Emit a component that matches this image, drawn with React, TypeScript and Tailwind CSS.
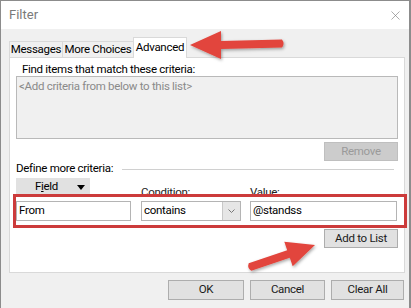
import { X } from "lucide-react";

const font = { fontFamily: 'Roboto, "Noto Sans", sans-serif' };

function Btn({ label, w, disabled }: { label: string; w: string; disabled?: boolean }) {
  return (
    <div
      className={`${w} h-[19px] flex items-center justify-center text-[11.5px] whitespace-nowrap border ${
        disabled
          ? "bg-[#cccccc] border-[#bfbfbf] text-[#9a9a9a]"
          : "bg-[#e1e1e1] border-[#adadad] text-[#1a1a1a]"
      }`}
    >
      {label}
    </div>
  );
}

export default function App() {
  return (
    <div
      className="relative w-[411px] h-[308px] overflow-hidden bg-[#f0f0f0] border-l border-r-2 border-t border-[#8c8c8c] tracking-[-0.3px]"
      style={font}
    >
      {/* title bar */}
      <div className="h-[28px] bg-white flex items-center justify-between pl-[8px] pr-[6px]">
        <span className="text-[13px] tracking-normal text-[#7a7a7a]">Filter</span>
        <X size={15} strokeWidth={1} className="text-[#7a7a7a]" />
      </div>

      <div className="pl-[8px] pr-[4px]">
        {/* tabs */}
        <div className="flex items-end h-[28px] pt-[8px] text-[11.5px] text-black whitespace-nowrap">
          <div className="w-[53px] h-[16px] flex items-center justify-center border-l border-t border-[#d9d9d9] leading-none">
            Messages
          </div>
          <div className="w-[71px] h-[16px] flex items-center justify-center border-l border-t border-[#d9d9d9] leading-none">
            More Choices
          </div>
          <div className="relative z-10 w-[54px] h-[21px] -mb-px flex items-center justify-center bg-white border-l border-t border-r border-[#d9d9d9] leading-none">
            Advanced
          </div>
        </div>

        {/* panel */}
        <div className="h-[216px] w-[396px] bg-white border border-[#d9d9d9] text-[11.5px] text-black">
          <div className="pl-[12px] pt-[3px] h-[18px] leading-[16px]">Find items that match these criteria:</div>
          <div className="ml-[6px] w-[382px] h-[63px] bg-[#f0f0f0] border border-[#b9b9b9] pl-[2px] pt-[1px] text-[#8a8a8a] leading-[16px]">
            &lt;Add criteria from below to this list&gt;
          </div>
          <div className="flex justify-end pr-[6px] pt-[3px]">
            <Btn label="Remove" w="w-[74px]" disabled />
          </div>

          <div className="flex items-center pl-[6px] pr-[10px] mt-[1px] h-[14px]">
            <span className="leading-none whitespace-nowrap">Define more criteria:</span>
            <div className="flex-1 ml-[9px] h-px bg-[#d0d0d0]" />
          </div>

          <div className="flex items-start h-[16px] pl-[6px] mt-[2px] whitespace-nowrap">
            <div className="w-[74px] h-[18px] shrink-0 flex items-center bg-[#e1e1e1] pl-[19px]">
              <span className="leading-none w-[24px]">
                F<u>i</u>eld
              </span>
              <svg width="8" height="5" viewBox="0 0 8 5" className="ml-[18px]">
                <path d="M0 0 L8 0 L4 5 Z" fill="#000" />
              </svg>
            </div>
            <span className="ml-[51px] mt-[9px] w-[60px] leading-none text-[#222]">Condition:</span>
            <span className="ml-[49px] mt-[9px] leading-none text-[#222]">Value:</span>
          </div>

          {/* highlighted criteria row */}
          <div className="relative z-10 ml-[3px] w-[394px] h-[34px] border-[3px] border-[#cc3b3b] flex items-start pt-[4px]">
            <div className="w-[115px] h-[20px] border border-[#b4b4b4] bg-white flex items-center pl-[2px]">
              From
            </div>
            <div className="ml-[10px] w-[100px] h-[20px] border border-[#b4b4b4] bg-white flex items-center">
              <span className="flex-1 pl-[2px]">contains</span>
              <div className="w-[18px] h-full bg-[#e6e6e6] border-l border-[#c8c8c8] flex items-center justify-center">
                <svg width="7" height="4" viewBox="0 0 7 4">
                  <path d="M0.5 0.5 L3.5 3.5 L6.5 0.5" fill="none" stroke="#777" strokeWidth="1" />
                </svg>
              </div>
            </div>
            <div className="ml-[9px] w-[147px] h-[20px] border border-[#b4b4b4] bg-white flex items-center pl-[2px]">
              @standss
            </div>
          </div>

          <div className="flex justify-end pr-[6px] pt-[1px]">
            <Btn label="Add to List" w="w-[74px]" />
          </div>
        </div>

        {/* footer */}
        <div className="flex justify-end gap-[6px] pt-[7px] pr-[1px]">
          <Btn label="OK" w="w-[76px] h-[20px]" />
          <Btn label="Cancel" w="w-[75px] h-[20px]" />
          <Btn label="Clear All" w="w-[73px] h-[20px]" />
        </div>
      </div>

      {/* annotation arrows */}
      <svg className="absolute left-0 top-0 pointer-events-none" width="411" height="308" viewBox="0 0 411 308">
        <defs>
          <filter id="sh" x="-20%" y="-20%" width="140%" height="140%">
            <feDropShadow dx="1" dy="1.5" stdDeviation="1.5" floodColor="#000" floodOpacity="0.35" />
          </filter>
        </defs>
        <g fill="#e2453c" filter="url(#sh)">
          <path d="M281 38.5 Q284 42.5 281 46.5 L220 48 L220 58 L189 44 L220 30 L220 40 Z" />
          <path d="M247.7 262.2 L286.2 249.2 L283.3 240.7 L314 244 L291.7 265.3 L288.8 256.8 L250.3 269.8 Q246 267 247.7 262.2 Z" />
        </g>
      </svg>
    </div>
  );
}
